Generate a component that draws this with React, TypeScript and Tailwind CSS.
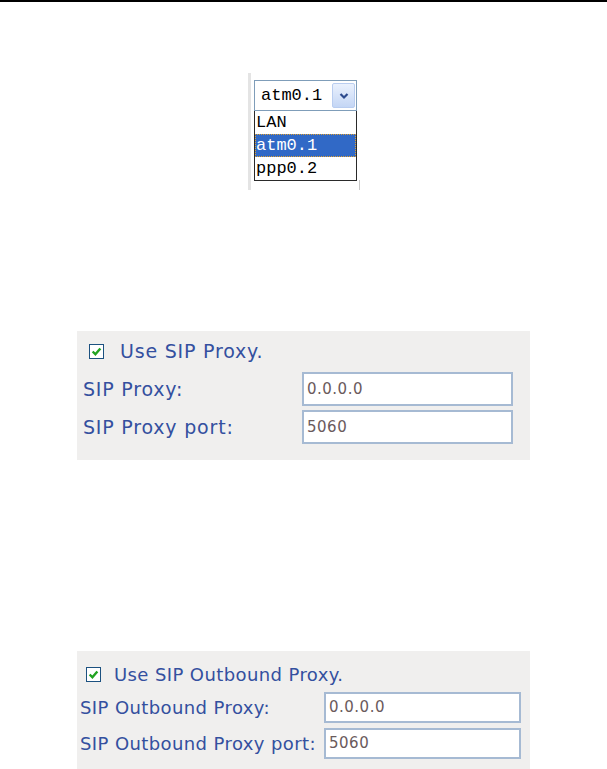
import React from 'react';

const sans = { fontFamily: '"DejaVu Sans", Verdana, sans-serif' };
const mono = { fontFamily: '"Liberation Mono", "DejaVu Sans Mono", monospace' };

function Check({ className }: { className: string }) {
    return (
        <div className={`w-[15px] h-[15px] border border-[#1c5180] bg-white flex items-center justify-center shrink-0 ${className}`}>
            <svg viewBox="0 0 10 10" className="w-[11px] h-[11px]">
                <path d="M1.5 5 L4 7.5 L8.5 2.2" fill="none" stroke="#22a322" strokeWidth="2.2" />
            </svg>
        </div>
    );
}

function Field({ value, className }: { value: string; className: string }) {
    return (
        <div className={`bg-white border-2 border-[#a6bad3] flex items-center pl-[3px] text-[15px] tracking-[0.5px] text-[#6a5a5c] ${className}`} style={sans}>
            {value}
        </div>
    );
}

export default function App() {
    return (
        <div className="w-[607px] h-[769px] bg-white overflow-hidden">
            <div className="h-[2px] bg-black" />

            {/* dropdown capture */}
            <div className="ml-[248px] mt-[71px] pt-[7px] w-[111px] h-[117px] border-l-[3px] border-[#e4e4e4] relative">
                <div className="absolute right-[-1px] bottom-0 w-px h-[10px] bg-[#c8c8c8]" />
                <div className="ml-[3px] w-[103px]" style={mono}>
                    <div className="h-[31px] border border-[#7f9db9] bg-white flex items-center justify-between pl-[6px] pr-[1px]">
                        <span className="text-[17px] text-black">atm0.1</span>
                        <div className="w-[23px] h-[25px] rounded-[2px] border border-[#b9cdf0] bg-gradient-to-b from-[#eaf1fd] to-[#c4d6f5] flex items-center justify-center">
                            <svg viewBox="0 0 10 8" className="w-[10px] h-[8px]">
                                <path d="M1.5 2 L5 5.5 L8.5 2" fill="none" stroke="#2c4a8e" strokeWidth="2.2" />
                            </svg>
                        </div>
                    </div>
                    <div className="border border-t-0 border-[#2a2a2a] bg-white text-[17px] leading-[23px]">
                        <div className="pl-[1px] h-[23px] text-black">LAN</div>
                        <div className="pl-[1px] h-[23px] bg-[#3169c6] text-white outline-1 outline-dotted outline-[#e0a030] -outline-offset-1">atm0.1</div>
                        <div className="pl-[1px] h-[23px] text-black">ppp0.2</div>
                    </div>
                </div>
            </div>

            {/* SIP proxy panel */}
            <div className="ml-[77px] mt-[141px] w-[453px] h-[129px] bg-[#f0efee] text-[#34509f] text-[19px] tracking-[0.8px]" style={sans}>
                <div className="h-[41px] flex items-center pl-[12px]">
                    <Check className="" />
                    <span className="ml-[16px]">Use SIP Proxy.</span>
                </div>
                <div className="flex flex-col gap-[4px] pl-[6px]">
                    <div className="flex items-center">
                        <span className="w-[219px]">SIP Proxy:</span>
                        <Field value="0.0.0.0" className="w-[211px] h-[34px]" />
                    </div>
                    <div className="flex items-center">
                        <span className="w-[219px]">SIP Proxy port:</span>
                        <Field value="5060" className="w-[211px] h-[34px]" />
                    </div>
                </div>
            </div>

            {/* SIP outbound proxy panel */}
            <div className="ml-[77px] mt-[191px] w-[453px] h-[130px] bg-[#f0efee] text-[#34509f] text-[18px] tracking-[0.4px]" style={sans}>
                <div className="h-[41px] flex items-center pl-[9px] pt-[6px]">
                    <Check className="" />
                    <span className="ml-[13px]">Use SIP Outbound Proxy.</span>
                </div>
                <div className="flex flex-col gap-[5px] pl-[3px]">
                    <div className="flex items-center">
                        <span className="w-[244px]">SIP Outbound Proxy:</span>
                        <Field value="0.0.0.0" className="w-[197px] h-[31px]" />
                    </div>
                    <div className="flex items-center">
                        <span className="w-[244px] whitespace-nowrap">SIP Outbound Proxy port:</span>
                        <Field value="5060" className="w-[197px] h-[31px]" />
                    </div>
                </div>
            </div>
        </div>
    );
}
